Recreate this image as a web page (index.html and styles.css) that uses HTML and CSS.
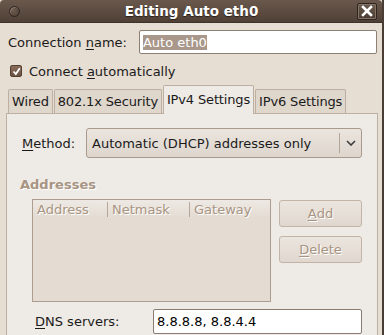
FILE: index.html
```html
<!DOCTYPE html>
<html lang="en">
<head>
    <meta charset="UTF-8">
    <title>Editing Auto eth0</title>
    <link rel="stylesheet" href="styles.css">
</head>
<body>
    <div class="window">
        <div class="titlebar">
            <span class="win-menu"></span>
            <span class="title">Editing Auto eth0</span>
            <span class="win-close">
                <svg width="12" height="12" viewBox="0 0 12 12"><path d="M2 2 L10 10 M10 2 L2 10" stroke="#fff" stroke-width="2.6" stroke-linecap="square"/></svg>
            </span>
        </div>
        <div class="content">
            <div class="row name-row">
                <label class="lbl">Connection <u>n</u>ame:</label>
                <div class="entry name-entry"><span class="sel">Auto eth0</span></div>
            </div>
            <div class="row check-row">
                <span class="check">
                    <svg width="9" height="9" viewBox="0 0 9 9"><path d="M1.5 4.5 L3.8 7 L7.8 1.2" fill="none" stroke="#fff" stroke-width="1.8"/></svg>
                </span>
                <span>Connect <u>a</u>utomatically</span>
            </div>
            <div class="tabs">
                <div class="tab">Wired</div>
                <div class="tab">802.1x Security</div>
                <div class="tab active">IPv4 Settings</div>
                <div class="tab">IPv6 Settings</div>
            </div>
            <div class="panel">
                <div class="row method-row">
                    <label class="lbl method-lbl"><u>M</u>ethod:</label>
                    <div class="combo">
                        <span class="combo-text">Automatic (DHCP) addresses only</span>
                        <span class="combo-sep"></span>
                        <span class="combo-arrow">
                            <svg width="10" height="6" viewBox="0 0 10 6"><path d="M1 1 L5 5 L9 1" fill="none" stroke="#3c3c3c" stroke-width="1.6"/></svg>
                        </span>
                    </div>
                </div>
                <div class="section-title">Addresses</div>
                <div class="addr-row">
                    <div class="tree">
                        <div class="tree-head">
                            <span class="col col-addr">Address</span>
                            <span class="col col-mask">Netmask</span>
                            <span class="col col-gw">Gateway</span>
                        </div>
                    </div>
                    <div class="btns">
                        <div class="btn"><u>A</u>dd</div>
                        <div class="btn"><u>D</u>elete</div>
                    </div>
                </div>
                <div class="row dns-row">
                    <label class="lbl dns-lbl"><u>D</u>NS servers:</label>
                    <div class="entry dns-entry">8.8.8.8, 8.8.4.4</div>
                </div>
            </div>
        </div>
    </div>
</body>
</html>
```

FILE: styles.css
```css
body {
    margin: 0;
    width: 384px;
    height: 335px;
    overflow: hidden;
    font-family: "DejaVu Sans", sans-serif;
    font-size: 13px;
    color: #1a1a1a;
    background: #e6ddd3;
}
u {
    text-decoration: underline;
    text-underline-offset: 2px;
}
.window {
    height: 335px;
    border-right: 2px solid #4a3d35;
    box-sizing: border-box;
    background: #e6ddd3;
}
.titlebar {
    height: 22px;
    background: linear-gradient(#6a584c, #4f4036);
    border-radius: 4px 4px 0 0;
    display: flex;
    align-items: center;
    position: relative;
    border-bottom: 1px solid #3e322b;
}
.win-menu {
    width: 9px;
    height: 9px;
    margin-left: 9px;
    border-radius: 50%;
    border: 1px solid #2e241e;
    background: radial-gradient(circle at 40% 40%, #6d5b4f, #4a3b32);
    box-shadow: inset 1px 1px 0 #8a786b;
}
.title {
    flex: 1;
    text-align: center;
    color: #fff;
    font-weight: bold;
    font-size: 13.5px;
    text-shadow: 0 1px 1px #2a201a;
    margin-left: 6px;
}
.win-close {
    width: 18px;
    height: 15px;
    margin-right: 5px;
    border: 1px solid #2f251f;
    border-radius: 2px;
    background: linear-gradient(#6a5a4e, #4a3c33);
    box-shadow: inset 0 0 0 1px #857365;
    display: flex;
    align-items: center;
    justify-content: center;
}
.content {
    padding: 7px 0 0 6px;
}
.row {
    display: flex;
    align-items: center;
}
.lbl {
    padding-left: 2px;
}
.name-row {
    height: 24px;
}
.entry {
    background: #fff;
    border: 1px solid #8c7f74;
    border-radius: 2px;
    box-sizing: border-box;
    height: 24px;
    display: flex;
    align-items: center;
    padding-left: 3px;
    color: #000;
}
.name-entry {
    margin-left: 12px;
    width: 238px;
}
.sel {
    background: #a8978a;
    color: #fff;
}
.check-row {
    margin-top: 7px;
    height: 20px;
    padding-left: 4px;
    gap: 7px;
}
.check {
    width: 12px;
    height: 12px;
    border-radius: 2px;
    background: linear-gradient(#8a6c5a, #6b5243);
    border: 1px solid #54402f;
    box-sizing: border-box;
    display: flex;
    align-items: center;
    justify-content: center;
}
.tabs {
    display: flex;
    margin-top: 8px;
    height: 24px;
    align-items: flex-end;
    padding-left: 2px;
}
.tab {
    height: 24px;
    box-sizing: border-box;
    padding: 0 3px;
    border: 1px solid #bdb0a3;
    border-bottom: none;
    border-radius: 2px 2px 0 0;
    background: #dfd6cc;
    display: flex;
    align-items: center;
    margin-right: 1px;
    color: #1a1a1a;
    letter-spacing: -0.15px;
}
.tab.active {
    height: 29px;
    background: #eeeae5;
    margin-bottom: -1px;
    position: relative;
    z-index: 1;
    padding-bottom: 2px;
}
.panel {
    background: #eeeae5;
    border: 1px solid #bdb0a3;
    margin-right: 4px;
    height: 230px;
    padding: 14px 14px 0 13px;
    box-sizing: border-box;
}
.method-row {
    height: 30px;
}
.method-lbl {
    width: 64px;
}
.combo {
    flex: 1;
    height: 30px;
    box-sizing: border-box;
    border: 1px solid #a89a8d;
    border-radius: 3px;
    background: linear-gradient(#ebe5df, #ded6cd);
    display: flex;
    align-items: center;
    margin-right: 1px;
}
.combo-text {
    flex: 1;
    padding-left: 5px;
}
.combo-sep {
    width: 1px;
    height: 20px;
    background: #b3a598;
}
.combo-arrow {
    width: 21px;
    display: flex;
    justify-content: center;
}
.section-title {
    margin-top: 19px;
    font-weight: bold;
    color: #a89482;
    text-shadow: 1px 1px 0 #fff;
}
.addr-row {
    display: flex;
    margin-top: 7px;
    padding-left: 12px;
}
.tree {
    width: 239px;
    height: 103px;
    border: 1px solid #ad9d8f;
    box-sizing: border-box;
    background: #e4dcd3;
}
.tree-head {
    height: 19px;
    display: flex;
    align-items: center;
    background: linear-gradient(#eee9e4, #e3dbd2);
    color: #a89482;
    text-shadow: 1px 1px 0 #fff;
}
.col {
    padding-left: 4px;
    box-sizing: border-box;
}
.col-addr {
    width: 75px;
    border-right: 1px solid #b6a79a;
}
.col-mask {
    width: 82px;
    border-right: 1px solid #b6a79a;
}
.btns {
    margin-left: 8px;
    margin-top: 1px;
    display: flex;
    flex-direction: column;
    gap: 9px;
}
.btn {
    width: 83px;
    height: 27px;
    box-sizing: border-box;
    border: 1px solid #c2b4a7;
    border-radius: 3px;
    background: linear-gradient(#ebe5df, #e0d8cf);
    color: #a89482;
    text-shadow: 1px 1px 0 #fff;
    display: flex;
    align-items: center;
    justify-content: center;
}
.dns-row {
    margin-top: 7px;
    padding-left: 13px;
}
.dns-lbl {
    width: 118px;
}
.dns-entry {
    width: 209px;
    height: 25px;
    border-color: #8a7c70;
}
```
